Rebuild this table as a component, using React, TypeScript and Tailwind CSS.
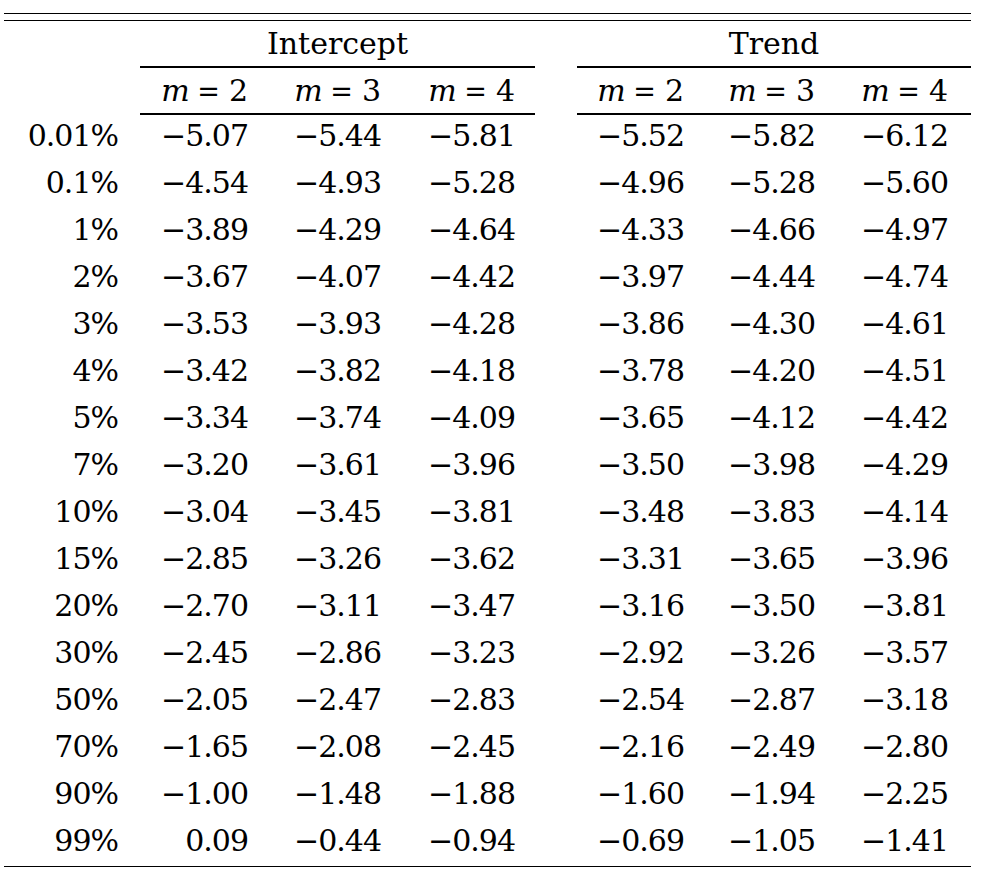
import React from 'react';

const rows: string[][] = [
  ['0.01%', '−5.07', '−5.44', '−5.81', '−5.52', '−5.82', '−6.12'],
  ['0.1%', '−4.54', '−4.93', '−5.28', '−4.96', '−5.28', '−5.60'],
  ['1%', '−3.89', '−4.29', '−4.64', '−4.33', '−4.66', '−4.97'],
  ['2%', '−3.67', '−4.07', '−4.42', '−3.97', '−4.44', '−4.74'],
  ['3%', '−3.53', '−3.93', '−4.28', '−3.86', '−4.30', '−4.61'],
  ['4%', '−3.42', '−3.82', '−4.18', '−3.78', '−4.20', '−4.51'],
  ['5%', '−3.34', '−3.74', '−4.09', '−3.65', '−4.12', '−4.42'],
  ['7%', '−3.20', '−3.61', '−3.96', '−3.50', '−3.98', '−4.29'],
  ['10%', '−3.04', '−3.45', '−3.81', '−3.48', '−3.83', '−4.14'],
  ['15%', '−2.85', '−3.26', '−3.62', '−3.31', '−3.65', '−3.96'],
  ['20%', '−2.70', '−3.11', '−3.47', '−3.16', '−3.50', '−3.81'],
  ['30%', '−2.45', '−2.86', '−3.23', '−2.92', '−3.26', '−3.57'],
  ['50%', '−2.05', '−2.47', '−2.83', '−2.54', '−2.87', '−3.18'],
  ['70%', '−1.65', '−2.08', '−2.45', '−2.16', '−2.49', '−2.80'],
  ['90%', '−1.00', '−1.48', '−1.88', '−1.60', '−1.94', '−2.25'],
  ['99%', '0.09', '−0.44', '−0.94', '−0.69', '−1.05', '−1.41'],
];

// label | c1 c2 c3 pad | gap | c4 c5 c6 pad
const gridCols = 'grid grid-cols-[136px_108px_133px_134px_20px_42px_107px_131px_133px_23px]';

const MHead = ({ n }: { n: number }) => (
  <div className="flex items-center justify-end h-[47px] border-b-2 border-black">
    <span className="italic tracking-[-2px]">m</span>
    <span className="mx-[8px] scale-x-90">=</span>
    <span>{n}</span>
  </div>
);

const Cell = ({ children }: { children: React.ReactNode }) => (
  <div className="flex items-center justify-end h-[47px] tracking-[-1px]">{children}</div>
);

export default function App() {
  return (
    <div
      className="w-[989px] h-[873px] bg-white text-black overflow-hidden text-[30px] leading-none"
      style={{ fontFamily: '"DejaVu Serif", "Liberation Serif", serif' }}
    >
      <div className="ml-[4px] w-[967px] pt-[13px]">
        {/* top double rule */}
        <div className="h-px bg-black" />
        <div className="mt-[6px] h-px bg-black" />

        {/* group headers */}
        <div className={gridCols}>
          <div />
          <div className="col-span-4 flex items-center justify-center h-[47px] border-b-2 border-black">
            Intercept
          </div>
          <div />
          <div className="col-span-4 flex items-center justify-center h-[47px] border-b-2 border-black">
            Trend
          </div>
        </div>

        {/* m = ... headers */}
        <div className={gridCols}>
          <div />
          <MHead n={2} />
          <MHead n={3} />
          <MHead n={4} />
          <div className="h-[47px] border-b-2 border-black" />
          <div />
          <MHead n={2} />
          <MHead n={3} />
          <MHead n={4} />
          <div className="h-[47px] border-b-2 border-black" />
        </div>

        {/* body */}
        <div className="-mt-[3px]">
          {rows.map((r) => (
            <div key={r[0]} className={gridCols}>
              <div className="flex items-center justify-end h-[47px] pr-[22px] tracking-[-1px]">{r[0]}</div>
              <Cell>{r[1]}</Cell>
              <Cell>{r[2]}</Cell>
              <Cell>{r[3]}</Cell>
              <div />
              <div />
              <Cell>{r[4]}</Cell>
              <Cell>{r[5]}</Cell>
              <Cell>{r[6]}</Cell>
              <div />
            </div>
          ))}
        </div>

        {/* bottom rule, caption below runs off the page */}
        <div className="mt-[2px] h-px bg-black" />
        <div className="pl-[10px] mt-0 leading-[36px] whitespace-nowrap">
          The data table holds the critical values of the test for the different cases.
        </div>
      </div>
    </div>
  );
}
